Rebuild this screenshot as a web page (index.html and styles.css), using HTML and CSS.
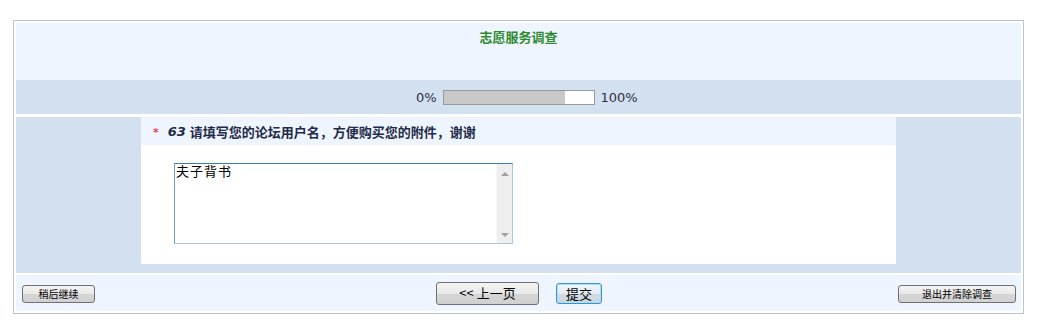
FILE: index.html
```html
<!DOCTYPE html>
<html lang="zh-CN">

<head>
   <meta charset="UTF-8" />
   <meta name="viewport" content="width=device-width, initial-scale=1.0" />
   <title>志愿服务调查</title>
   <link rel="stylesheet" href="styles.css">
</head>

<body>
   <div class="survey">
      <div class="survey-head">志愿服务调查</div>

      <div class="progress">
         <span class="progress-label left">0%</span>
         <div class="progress-bar"><div class="progress-fill"></div></div>
         <span class="progress-label right">100%</span>
      </div>

      <div class="question-row">
         <div class="side"></div>
         <div class="question">
            <div class="question-title">
               <span class="required">*</span>
               <span class="q-num">63</span>
               <span class="q-text">请填写您的论坛用户名，方便购买您的附件，谢谢</span>
            </div>
            <div class="question-body">
               <div class="answer-box">
                  <textarea class="answer" name="q63">夫子背书</textarea>
                  <div class="scrollbar">
                     <span class="arrow up"></span>
                     <span class="arrow down"></span>
                  </div>
               </div>
            </div>
         </div>
         <div class="side"></div>
      </div>

      <div class="survey-foot">
         <div class="foot-left">
            <button class="btn btn-small save" type="button">稍后继续</button>
         </div>
         <div class="nav">
            <button class="btn btn-nav prev" type="button">&lt;&lt; 上一页</button>
            <button class="btn btn-nav btn-submit" type="submit">提交</button>
         </div>
         <div class="foot-right">
            <button class="btn btn-small quit" type="button">退出并清除调查</button>
         </div>
      </div>
   </div>
</body>

</html>
```

FILE: styles.css
```css
:root {
   --light: #eef5fe;
   --band: #d3e0f0;
   --text: #2b3145;
}

* {
   box-sizing: border-box;
}

body {
   margin: 0;
   background: #fff;
   font-family: "DejaVu Sans", "Noto Sans CJK SC", sans-serif;
   color: var(--text);
}

.survey {
   margin: 20px 19px 0 13px;
   border: 1px solid #bcc5cc;
   padding: 2px;
   display: flex;
   flex-direction: column;
}

.survey-head {
   height: 57px;
   background: var(--light);
   padding-top: 4px;
   text-align: center;
   font-family: "Noto Sans CJK SC", sans-serif;
   font-size: 13px;
   font-weight: bold;
   color: #2f8a2f;
}

.progress {
   height: 34px;
   background: var(--band);
   display: grid;
   grid-template-columns: 1fr 152px 1fr;
   align-items: center;
   font-size: 13px;
   color: #2e3040;
}

.progress-label.left {
   justify-self: end;
   margin-right: 6px;
}

.progress-label.right {
   justify-self: start;
   margin-left: 6px;
}

.progress-bar {
   height: 15px;
   border: 1px solid #999;
   background: #fff;
}

.progress-fill {
   width: 121px;
   height: 100%;
   background: #c8c8c8;
}

.question-row {
   margin-top: 3px;
   display: grid;
   grid-template-columns: 125px 1fr 125px;
   background: var(--band);
   padding-bottom: 9px;
}

.question-title {
   height: 28px;
   background: var(--light);
   display: flex;
   align-items: center;
   padding-left: 12px;
   font-weight: bold;
   font-size: 13px;
   color: #1f2b48;
}

.required {
   color: #ee3b6c;
   font-size: 11px;
   margin-right: 9px;
   margin-top: 2px;
}

.q-num {
   font-style: italic;
   font-size: 13px;
   margin-right: 4px;
}

.q-text {
   font-family: "Noto Sans CJK SC", sans-serif;
}

.question-body {
   height: 119px;
   background: #fff;
   padding: 18px 0 0 33px;
}

.answer-box {
   width: 339px;
   height: 81px;
   display: flex;
   border: 1px solid #a6c9e6;
   border-top-color: #3f7cae;
   border-left-color: #6f9cc4;
}

.answer {
   flex: 1;
   margin: 0;
   padding: 0 1px;
   resize: none;
   overflow: hidden;
   border: none;
   font-family: "Noto Sans CJK SC", sans-serif;
   font-size: 13px;
   line-height: 14px;
   letter-spacing: 1px;
   color: #000;
   outline: none;
}

.scrollbar {
   width: 16px;
   background: #efefef;
   border-left: 1px solid #f8f8f8;
   display: flex;
   flex-direction: column;
   justify-content: space-between;
   align-items: center;
   padding: 8px 0 6px;
}

.arrow {
   width: 0;
   height: 0;
   border-left: 4px solid transparent;
   border-right: 4px solid transparent;
}

.arrow.up {
   border-bottom: 4px solid #a0a0a0;
}

.arrow.down {
   border-top: 4px solid #a0a0a0;
}

.survey-foot {
   margin-top: 2px;
   height: 36px;
   background: var(--light);
   display: grid;
   grid-template-columns: 1fr auto 1fr;
   align-items: center;
   padding: 0 5px 0 6px;
}

.foot-right {
   text-align: right;
}

.nav {
   display: flex;
   align-items: center;
   gap: 17px;
}

.btn {
   margin: 0;
   border: 1px solid #707070;
   border-radius: 3px;
   background: linear-gradient(#f4f4f4, #e8e8e8 50%, #d6d6d6 51%, #d0d0d0);
   font-family: "Noto Sans CJK SC", sans-serif;
   color: #000;
   padding: 0;
   cursor: pointer;
   vertical-align: middle;
}

.btn-small {
   height: 18px;
   font-size: 10px;
   line-height: 16px;
}

.save {
   width: 73px;
}

.quit {
   width: 118px;
}

.btn-nav {
   height: 23px;
   font-size: 13px;
   line-height: 20px;
   width: 103px;
}

.btn-submit {
   width: 46px;
   height: 21px;
   line-height: 17px;
   border-color: #3c93c9;
   box-shadow: inset 0 0 0 1px #a8e0f8;
   background: linear-gradient(#f0f6fa, #e4edf3 50%, #d2dde5 51%, #c8d3db);
}
```
